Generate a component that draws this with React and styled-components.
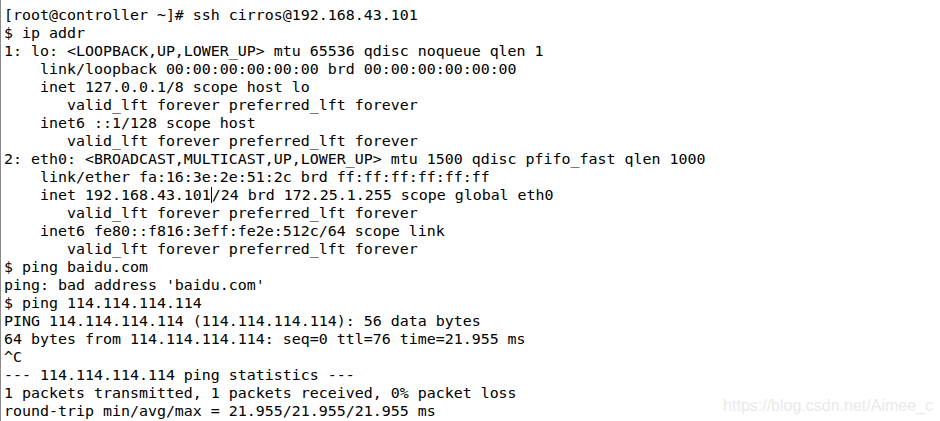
import React from "react";
import styled, { createGlobalStyle } from "styled-components";

const Global = createGlobalStyle`
  html, body { margin: 0; padding: 0; background: #ffffff; }
  body { width: 940px; height: 421px; overflow: hidden; }
`;

const Screen = styled.div`
  position: relative;
  width: 940px;
  height: 421px;
  box-sizing: border-box;
  border-left: 1px solid #8a8a8a;
  background: #ffffff;
  padding: 6px 0 0 3px;
  overflow: hidden;
`;

const Output = styled.pre`
  margin: 0;
  font-family: "DejaVu Sans Mono", monospace;
  font-size: 14.95px;
  line-height: 18px;
  color: #000000;
  white-space: pre;
`;

const Cursor = styled.span`
  display: inline-block;
  width: 0;
  height: 16px;
  border-left: 1px solid #000;
  vertical-align: -3px;
`;

const Watermark = styled.div`
  position: absolute;
  right: 7px;
  bottom: 6px;
  font-family: "Liberation Sans", Arial, sans-serif;
  font-size: 16px;
  line-height: 18px;
  color: #e9e9e9;
`;

const lines = [
  "[root@controller ~]# ssh cirros@192.168.43.101",
  "$ ip addr",
  "1: lo: <LOOPBACK,UP,LOWER_UP> mtu 65536 qdisc noqueue qlen 1",
  "    link/loopback 00:00:00:00:00:00 brd 00:00:00:00:00:00",
  "    inet 127.0.0.1/8 scope host lo",
  "       valid_lft forever preferred_lft forever",
  "    inet6 ::1/128 scope host",
  "       valid_lft forever preferred_lft forever",
  "2: eth0: <BROADCAST,MULTICAST,UP,LOWER_UP> mtu 1500 qdisc pfifo_fast qlen 1000",
  "    link/ether fa:16:3e:2e:51:2c brd ff:ff:ff:ff:ff:ff",
  null,
  "       valid_lft forever preferred_lft forever",
  "    inet6 fe80::f816:3eff:fe2e:512c/64 scope link",
  "       valid_lft forever preferred_lft forever",
  "$ ping baidu.com",
  "ping: bad address 'baidu.com'",
  "$ ping 114.114.114.114",
  "PING 114.114.114.114 (114.114.114.114): 56 data bytes",
  "64 bytes from 114.114.114.114: seq=0 ttl=76 time=21.955 ms",
  "^C",
  "--- 114.114.114.114 ping statistics ---",
  "1 packets transmitted, 1 packets received, 0% packet loss",
  "round-trip min/avg/max = 21.955/21.955/21.955 ms",
];

export default function App() {
  return (
    <>
      <Global />
      <Screen>
        <Output>
          {lines.map((l, i) =>
            l === null ? (
              <React.Fragment key={i}>
                {"    inet 192.168.43.101"}
                <Cursor />
                {"/24 brd 172.25.1.255 scope global eth0\n"}
              </React.Fragment>
            ) : (
              <React.Fragment key={i}>{l + (i < lines.length - 1 ? "\n" : "")}</React.Fragment>
            )
          )}
        </Output>
        <Watermark>https://blog.csdn.net/Aimee_c</Watermark>
      </Screen>
    </>
  );
}
